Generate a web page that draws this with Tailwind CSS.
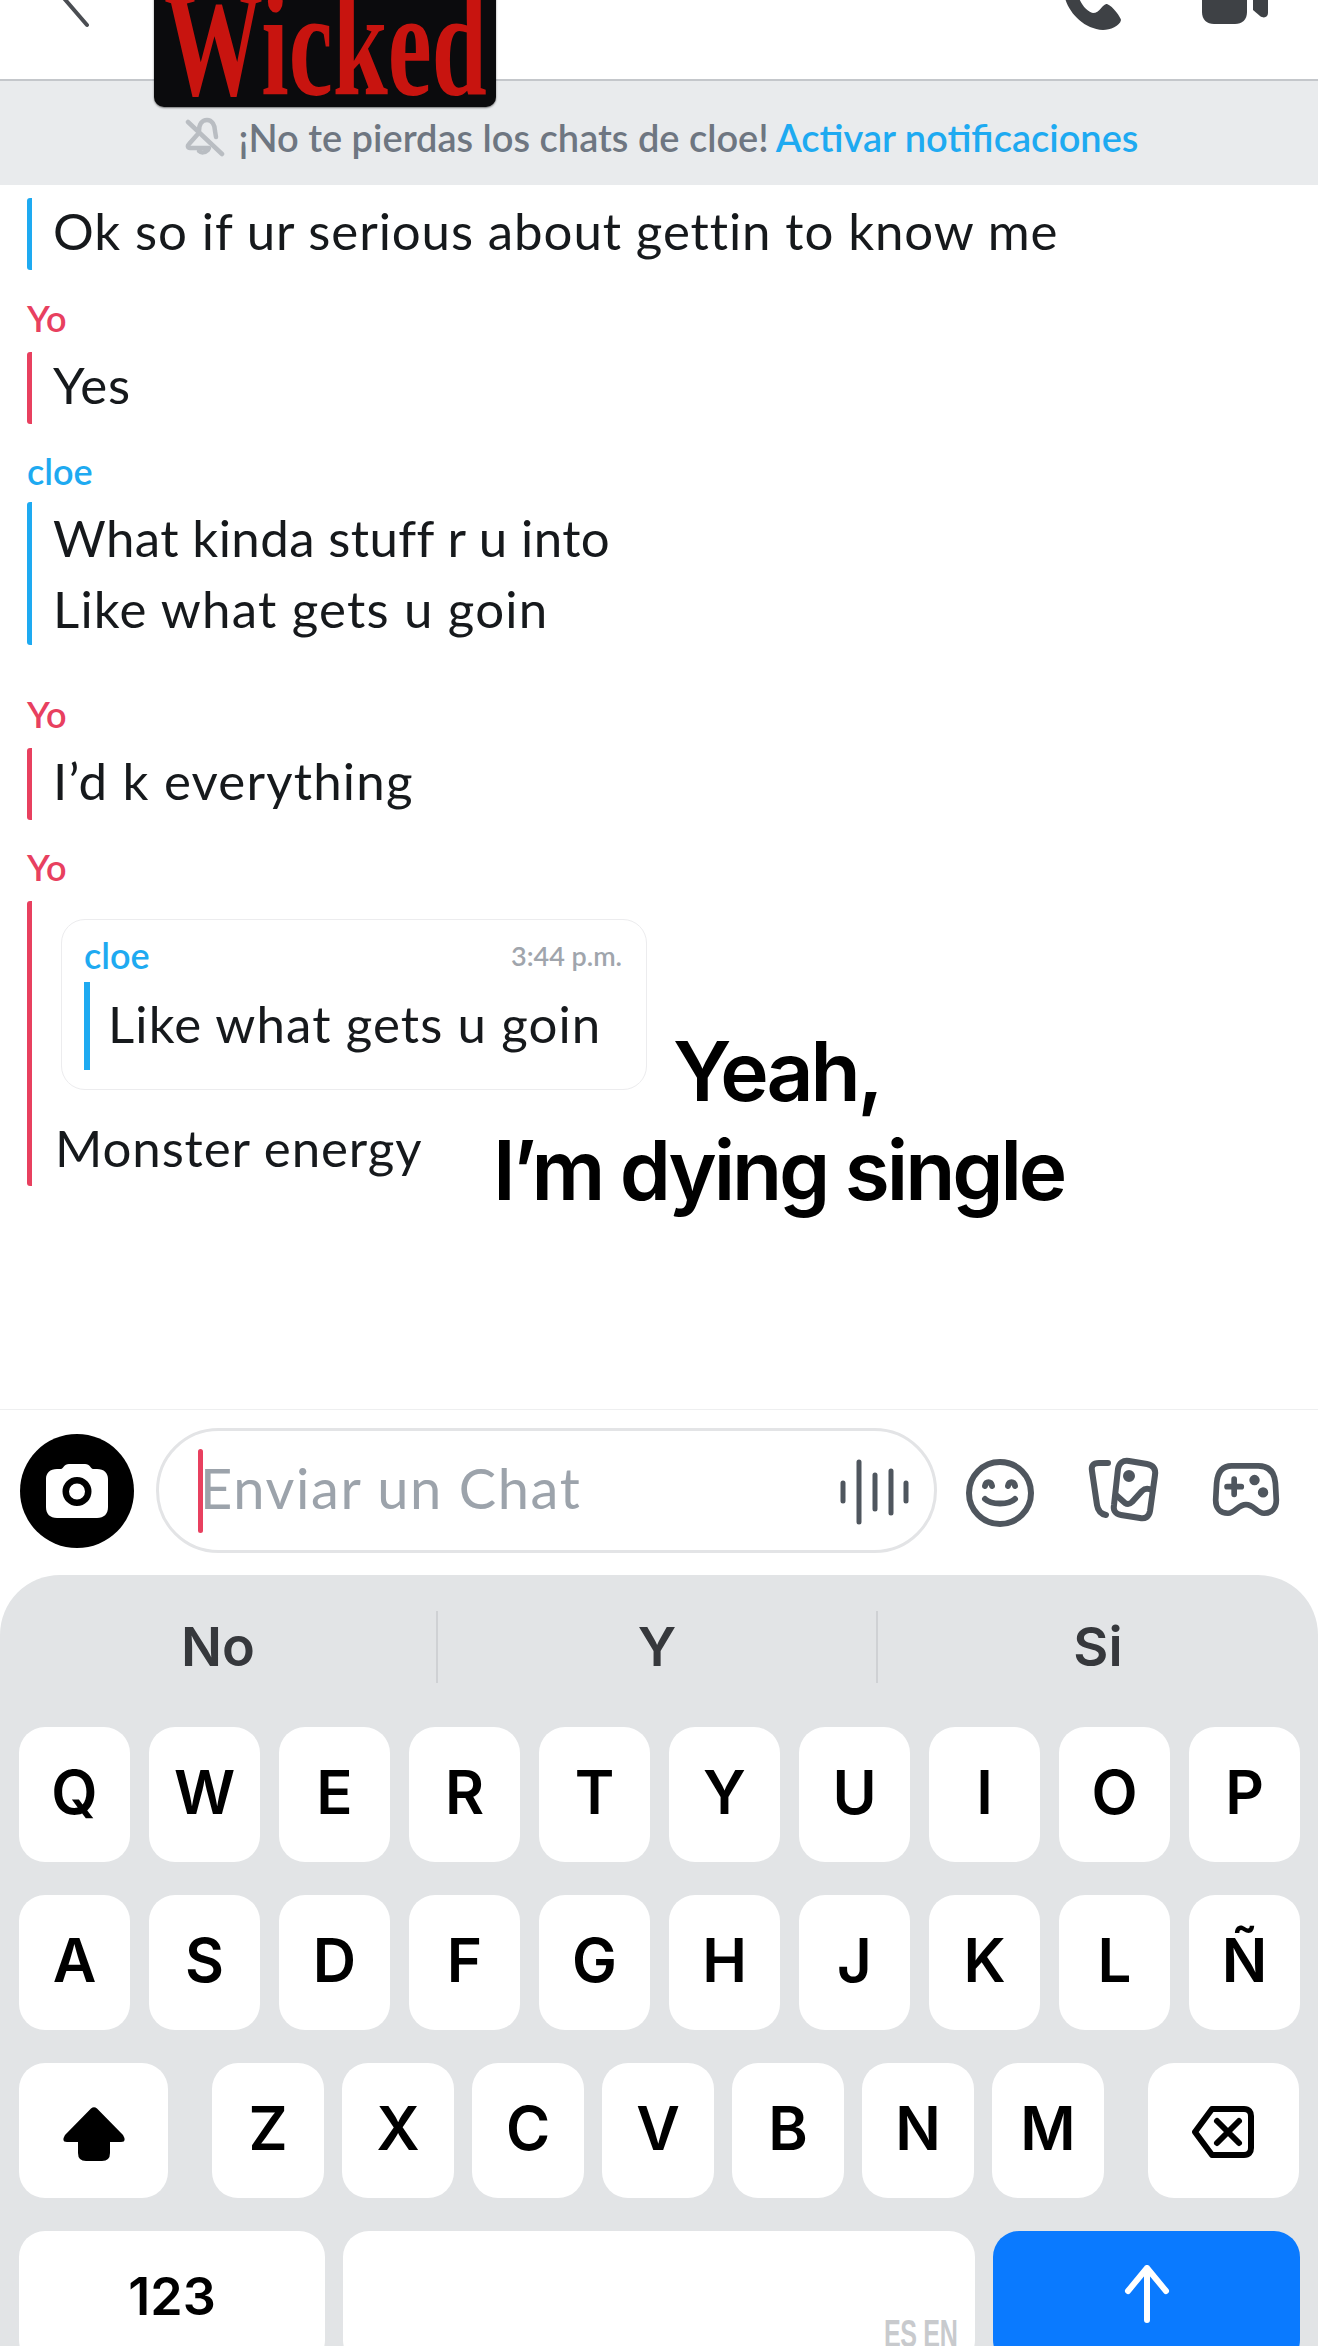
<!DOCTYPE html>
<html><head><meta charset="utf-8"><script src="https://cdn.jsdelivr.net/npm/@tailwindcss/browser@4"></script></head>
<body class="bg-white">
<div class="relative w-[1318px] h-[2346px] overflow-hidden bg-white font-['Lato',sans-serif] text-[#16191c]">

<header class="relative h-[81px] bg-white border-b-2 border-[#c4c7cb]">
  <svg class="absolute left-[56px] top-0" width="40" height="30" viewBox="0 0 40 30"><path d="M6 -4L31 25" stroke="#4a4d52" stroke-width="4" stroke-linecap="round" fill="none"/></svg>
  <svg class="absolute left-[1058px] top-0" width="70" height="34" viewBox="0 0 70 34"><path d="M7 -2C11 13 26 29 45 30C52 30 62 26 63 20C63 18 55 6 49 4C45 3 42 13 35 13C30 12 24 6 21 -2Z" fill="#3e4145"/></svg>
  <svg class="absolute left-[1198px] top-0" width="74" height="30" viewBox="0 0 74 30"><path d="M4 -4H49V12C49 20 44 24 37 24H16C9 24 4 20 4 12Z" fill="#3e4145"/><path d="M55 -2H70V13C70 17 66 19 62 16L55 10Z" fill="#3e4145"/></svg>
</header>

<div class="h-[104px] bg-[#e9ebed] flex items-center justify-center gap-[14px] pl-[5px] pt-[8px] text-[38px] leading-none font-semibold">
  <svg width="40" height="40" viewBox="0 0 40 40" fill="none" stroke="#b9bdc2" stroke-width="4.500" stroke-linejoin="round" stroke-linecap="round"><path d="M14 14C14 7 17 3 22 3C27 3 30 8 30 14L31 20"/><path d="M12 18L4 27C2 29 3 31 5 31H24"/><path d="M14 34C16 36 20 36 23 33"/><path d="M3 5L37 37"/></svg>
  <span class="flex gap-[7px]">
    <span class="text-[#6e7681] whitespace-nowrap">¡No te pierdas los chats de cloe!</span>
    <span class="text-[#1eaaf1] whitespace-nowrap">Activar notificaciones</span>
  </span>
</div>

<div class="absolute left-[154px] top-[-20px] w-[342px] h-[127px] rounded-b-[10px] bg-[#0b0b0d] shadow-[0_1px_2px_rgba(0,0,0,.5)] overflow-hidden flex items-end justify-center">
  <span class="font-['Liberation_Serif',serif] font-bold text-[#c8140f] text-[150px] leading-[150px] whitespace-nowrap scale-x-[.66] mb-[-12px]">Wicked</span>
</div>

<main class="pl-[27px] pt-[13px] text-[51px] leading-[66px] tracking-[0.9px]">
  <div class="border-l-[5px] border-[#1eaaf1] rounded-[3px] pl-[21px] h-[72px] whitespace-nowrap">Ok so if ur serious about gettin to know me</div>

  <div class="mt-[30px] text-[#e8405f] text-[36px] leading-[36px] h-[52px] font-semibold tracking-normal">Yo</div>
  <div class="border-l-[5px] border-[#e8405f] rounded-[3px] pl-[21px] h-[72px]">Yes</div>

  <div class="mt-[29px] text-[#1eaaf1] text-[36px] leading-[36px] h-[57px] font-semibold tracking-normal">cloe</div>
  <div class="border-l-[5px] border-[#1eaaf1] rounded-[3px] pl-[21px] h-[143px] leading-[71px]">
    <div class="-mt-[8px] tracking-[0.4px]">What kinda stuff r u into</div>
    <div class="tracking-[1.2px]">Like what gets u goin</div>
  </div>

  <div class="mt-[50px] text-[#e8405f] text-[36px] leading-[38px] h-[53px] font-semibold tracking-normal">Yo</div>
  <div class="border-l-[5px] border-[#e8405f] rounded-[3px] pl-[21px] h-[72px] tracking-[1.2px]">I’d k everything</div>

  <div class="mt-[29px] text-[#e8405f] text-[36px] leading-[36px] h-[52px] font-semibold tracking-normal">Yo</div>
  <div class="border-l-[5px] border-[#e8405f] rounded-[3px] h-[285px] pt-[18px] pl-[29px]">
    <div class="w-[586px] h-[171px] rounded-[24px] border border-[#ececee] pl-[22px] pr-[24px] pt-[10px]">
      <div class="flex justify-between items-center h-[50px] leading-none tracking-normal">
        <span class="text-[#1eaaf1] text-[36px] font-semibold">cloe</span>
        <span class="text-[#a0a5ac] text-[27px] font-semibold">3:44 p.m.</span>
      </div>
      <div class="mt-[2px] border-l-[6px] border-[#1eaaf1] h-[88px] pl-[18px] leading-[84px] whitespace-nowrap tracking-[1.1px]">Like what gets u goin</div>
    </div>
    <div class="mt-[22px] ml-[-6px] whitespace-nowrap leading-[72px]">Monster energy</div>
  </div>
</main>

<div class="absolute left-[493px] top-[1022px] w-[640px] font-['Inter',sans-serif] font-semibold text-black text-[82px] leading-[99px] tracking-[-3.1px]">
  <div class="pl-[180px]">Yeah,</div>
  <div>I’m dying single</div>
</div>

<section class="absolute left-0 top-[1409px] w-full h-[165px] border-t border-[#eeeff0] flex items-start pl-[20px] pt-[18px]">
  <div class="w-[114px] h-[114px] mt-[6px] rounded-full bg-black flex items-center justify-center">
    <svg width="64" height="56" viewBox="0 0 64 56"><path fill="#fff" fill-rule="evenodd" d="M12 6H16C18 6 19 1 24 1H40C45 1 46 6 48 6H52C59 6 63 10 63 16V44C63 51 59 55 52 55H12C5 55 1 51 1 44V16C1 10 5 6 12 6ZM32 14A14.500 14.500 0 1 0 32 43A14.500 14.500 0 1 0 32 14ZM32 20.500A8 8 0 1 1 32 36.500A8 8 0 1 1 32 20.500Z"/></svg>
  </div>
  <div class="ml-[22px] w-[781px] h-[125px] rounded-full border-[3px] border-[#e3e4e6] relative flex items-center pl-[41px] pb-[5px]">
    <span class="absolute left-[39px] top-[18px] w-[5px] h-[84px] rounded-[3px] bg-[#e8405f]"></span>
    <span class="text-[#9ca3ab] text-[56px] leading-none tracking-[1.6px] whitespace-nowrap">Enviar un Chat</span>
    <svg class="absolute left-[680px] top-[28px]" width="72" height="66" viewBox="0 0 72 66" fill="none" stroke="#4f565e" stroke-width="5" stroke-linecap="round"><path d="M4 24V42M20 3V63M36 16V50M52 12V54"/><path d="M67 24V42"/></svg>
  </div>
  <svg class="absolute left-[962px] top-[48px]" width="76" height="70" viewBox="0 0 76 70" fill="none" stroke="#4f565e" stroke-width="6" stroke-linecap="round" stroke-linejoin="round"><circle cx="38" cy="35" r="31"/><path d="M23 28C24 23 29 23 30 28M46 28C47 23 52 23 53 28"/><path d="M23 41C29 47 47 47 53 41"/></svg>
  <svg class="absolute left-[1085px] top-[47px]" width="76" height="68" viewBox="0 0 76 68" fill="none" stroke="#4f565e" stroke-width="6" stroke-linecap="round" stroke-linejoin="round"><path d="M23 6H14C8 6 6 9 7 14L12 48C13 54 16 57 21 58"/><path d="M44 4L62 7C68 8 71 12 70 18L65 54C64 60 60 62 55 61L36 58C30 57 28 53 29 48L33 12C34 6 38 3 44 4Z"/><path d="M31 38L40 46C43 48 45 47 47 45L57 34C60 31 63 31 67 33"/><circle cx="44" cy="19" r="3" fill="#4f565e"/></svg>
  <svg class="absolute left-[1210px] top-[50px]" width="72" height="61" viewBox="0 0 76 64" fill="none" stroke="#4f565e" stroke-width="6" stroke-linecap="round" stroke-linejoin="round"><path d="M23 6H51C63 6 68 13 69 24L70 42C70 51 65 56 57 56C49 56 47 47 38 47C29 47 27 56 19 56C11 56 6 51 6 42L7 24C8 13 13 6 23 6Z"/><path d="M18 28H33M25.500 20V36"/><circle cx="47" cy="21" r="2.500" fill="#4f565e"/><circle cx="56" cy="34" r="2.500" fill="#4f565e"/></svg>
</section>

<section class="absolute left-0 top-[1575px] w-full h-[771px] rounded-t-[60px] bg-[#e2e4e6] font-['Inter',sans-serif] text-black">
  <div class="flex h-[72px] mt-[36px] text-[54px] leading-none font-semibold text-[#36383c]">
    <div class="w-[438px] flex items-center justify-center border-r-2 border-[#cfd1d4]">No</div>
    <div class="w-[440px] flex items-center justify-center border-r-2 border-[#cfd1d4]">Y</div>
    <div class="w-[440px] flex items-center justify-center">Si</div>
  </div>
  <div class="pl-[19px] pt-[44px] flex flex-col gap-[33px] text-[60px] font-semibold leading-none">
    <div class="flex gap-[19px]">
      <div class="w-[111px] h-[135px] pb-[5px] rounded-[26px] bg-white flex items-center justify-center">Q</div><div class="w-[111px] h-[135px] pb-[5px] rounded-[26px] bg-white flex items-center justify-center">W</div><div class="w-[111px] h-[135px] pb-[5px] rounded-[26px] bg-white flex items-center justify-center">E</div><div class="w-[111px] h-[135px] pb-[5px] rounded-[26px] bg-white flex items-center justify-center">R</div><div class="w-[111px] h-[135px] pb-[5px] rounded-[26px] bg-white flex items-center justify-center">T</div><div class="w-[111px] h-[135px] pb-[5px] rounded-[26px] bg-white flex items-center justify-center">Y</div><div class="w-[111px] h-[135px] pb-[5px] rounded-[26px] bg-white flex items-center justify-center">U</div><div class="w-[111px] h-[135px] pb-[5px] rounded-[26px] bg-white flex items-center justify-center">I</div><div class="w-[111px] h-[135px] pb-[5px] rounded-[26px] bg-white flex items-center justify-center">O</div><div class="w-[111px] h-[135px] pb-[5px] rounded-[26px] bg-white flex items-center justify-center">P</div>
    </div>
    <div class="flex gap-[19px]">
      <div class="w-[111px] h-[135px] pb-[5px] rounded-[26px] bg-white flex items-center justify-center">A</div><div class="w-[111px] h-[135px] pb-[5px] rounded-[26px] bg-white flex items-center justify-center">S</div><div class="w-[111px] h-[135px] pb-[5px] rounded-[26px] bg-white flex items-center justify-center">D</div><div class="w-[111px] h-[135px] pb-[5px] rounded-[26px] bg-white flex items-center justify-center">F</div><div class="w-[111px] h-[135px] pb-[5px] rounded-[26px] bg-white flex items-center justify-center">G</div><div class="w-[111px] h-[135px] pb-[5px] rounded-[26px] bg-white flex items-center justify-center">H</div><div class="w-[111px] h-[135px] pb-[5px] rounded-[26px] bg-white flex items-center justify-center">J</div><div class="w-[111px] h-[135px] pb-[5px] rounded-[26px] bg-white flex items-center justify-center">K</div><div class="w-[111px] h-[135px] pb-[5px] rounded-[26px] bg-white flex items-center justify-center">L</div><div class="w-[111px] h-[135px] pb-[5px] rounded-[26px] bg-white flex items-center justify-center">Ñ</div>
    </div>
    <div class="flex gap-[18px]">
      <div class="w-[149px] h-[135px] rounded-[26px] bg-white flex items-center justify-center mr-[26px]">
        <svg class="mt-[6px]" width="62" height="54" viewBox="0 0 62 54"><path d="M28 1.500Q31 -1 34 1.500L60 28Q64 35 58 35H47V46Q47 54 39 54H23Q15 54 15 46V35H4Q-2 35 2 28Z" fill="#000"/></svg>
      </div>
      <div class="w-[112px] h-[135px] pb-[5px] rounded-[26px] bg-white flex items-center justify-center">Z</div><div class="w-[112px] h-[135px] pb-[5px] rounded-[26px] bg-white flex items-center justify-center">X</div><div class="w-[112px] h-[135px] pb-[5px] rounded-[26px] bg-white flex items-center justify-center">C</div><div class="w-[112px] h-[135px] pb-[5px] rounded-[26px] bg-white flex items-center justify-center">V</div><div class="w-[112px] h-[135px] pb-[5px] rounded-[26px] bg-white flex items-center justify-center">B</div><div class="w-[112px] h-[135px] pb-[5px] rounded-[26px] bg-white flex items-center justify-center">N</div><div class="w-[112px] h-[135px] pb-[5px] rounded-[26px] bg-white flex items-center justify-center">M</div>
      <div class="w-[151px] h-[135px] rounded-[26px] bg-white flex items-center justify-center ml-[26px]">
        <svg class="mt-[2px] mr-[2px]" width="62" height="52" viewBox="0 0 62 52" fill="none" stroke="#000" stroke-width="6" stroke-linejoin="round" stroke-linecap="round"><path d="M20 3H52C57 3 59 6 59 10V42C59 46 57 49 52 49H20L3 26Z"/><path d="M25 15L47 37M47 15L25 37"/></svg>
      </div>
    </div>
    <div class="flex gap-[18px]">
      <div class="w-[306px] h-[135px] pb-[4px] rounded-[26px] bg-white flex items-center justify-center text-[52px] font-semibold">123</div>
      <div class="w-[632px] h-[135px] rounded-[26px] bg-white relative">
        <span class="absolute right-[17px] top-[84px] origin-right scale-x-[.66] font-['Liberation_Sans',sans-serif] text-[#c8cacd] text-[38px] font-bold tracking-[-0.5px] whitespace-nowrap">ES EN</span>
      </div>
      <div class="w-[307px] h-[135px] rounded-[26px] bg-[#0a7aff] flex items-center justify-center">
        <svg class="mb-[10px]" width="50" height="58" viewBox="0 0 50 58" fill="none" stroke="#fff" stroke-width="6" stroke-linecap="round" stroke-linejoin="round"><path d="M25 3V55M6 26L25 3L44 26"/></svg>
      </div>
    </div>
  </div>
</section>
</div>
</body></html>
